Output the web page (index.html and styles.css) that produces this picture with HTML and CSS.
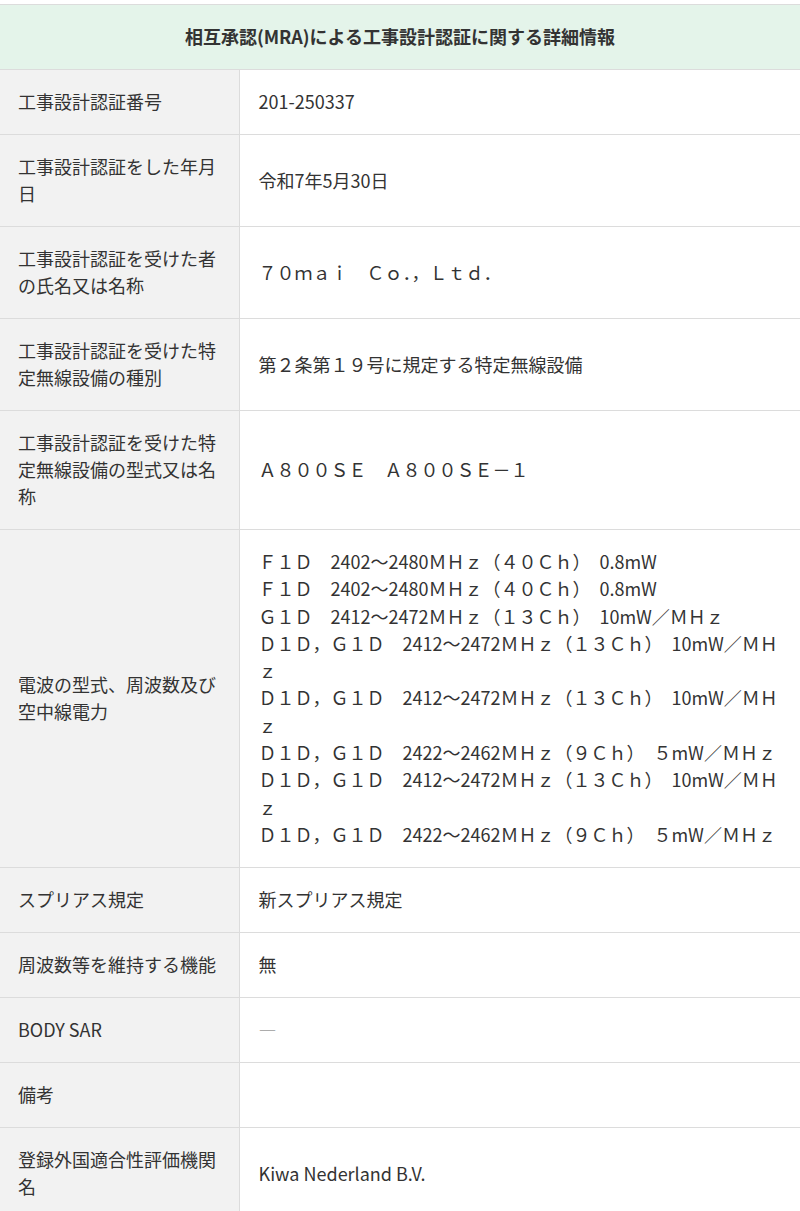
FILE: index.html
```html
<!DOCTYPE html>
<html lang="ja">
<head>
<meta charset="utf-8">
<link rel="stylesheet" href="styles.css">
</head>
<body>
<div class="page">
<table class="detail">
  <colgroup><col class="col-label"><col class="col-value"></colgroup>
  <thead>
    <tr><th colspan="2" class="head">相互承認(MRA)による工事設計認証に関する詳細情報</th></tr>
  </thead>
  <tbody>
    <tr><th>工事設計認証番号</th><td>201-250337</td></tr>
    <tr><th>工事設計認証をした年月日</th><td>令和7年5月30日</td></tr>
    <tr><th>工事設計認証を受けた者の氏名又は名称</th><td>７０ｍａｉ　Ｃｏ．，Ｌｔｄ．</td></tr>
    <tr><th>工事設計認証を受けた特定無線設備の種別</th><td>第２条第１９号に規定する特定無線設備</td></tr>
    <tr><th>工事設計認証を受けた特定無線設備の型式又は名称</th><td>Ａ８００ＳＥ　Ａ８００ＳＥ－１</td></tr>
    <tr><th>電波の型式、周波数及び空中線電力</th><td class="freq">Ｆ１Ｄ　2402～2480ＭＨｚ（４０Ｃｈ）　0.8mW<br>Ｆ１Ｄ　2402～2480ＭＨｚ（４０Ｃｈ）　0.8mW<br>Ｇ１Ｄ　2412～2472ＭＨｚ（１３Ｃｈ）　10mW／ＭＨｚ<br>Ｄ１Ｄ，Ｇ１Ｄ　2412～2472ＭＨｚ（１３Ｃｈ）　10mW／ＭＨｚ<br>Ｄ１Ｄ，Ｇ１Ｄ　2412～2472ＭＨｚ（１３Ｃｈ）　10mW／ＭＨｚ<br>Ｄ１Ｄ，Ｇ１Ｄ　2422～2462ＭＨｚ（９Ｃｈ）　５mW／ＭＨｚ<br>Ｄ１Ｄ，Ｇ１Ｄ　2412～2472ＭＨｚ（１３Ｃｈ）　10mW／ＭＨｚ<br>Ｄ１Ｄ，Ｇ１Ｄ　2422～2462ＭＨｚ（９Ｃｈ）　５mW／ＭＨｚ</td></tr>
    <tr><th>スプリアス規定</th><td>新スプリアス規定</td></tr>
    <tr><th>周波数等を維持する機能</th><td>無</td></tr>
    <tr><th>BODY SAR</th><td class="muted">―</td></tr>
    <tr><th>備考</th><td></td></tr>
    <tr><th>登録外国適合性評価機関名</th><td>Kiwa Nederland B.V.</td></tr>
  </tbody>
</table>
</div>
</body>
</html>
```

FILE: styles.css
```css
html, body {
  margin: 0;
  padding: 0;
  background: #fff;
}
.page {
  padding-top: 4px;
}
.detail {
  width: 800px;
  border-collapse: collapse;
  table-layout: fixed;
  font-family: "Noto Sans CJK JP", "Noto Sans", sans-serif;
  font-size: 18px;
  line-height: 27px;
  color: #333;
}
.col-label {
  width: 239px;
}
.detail th,
.detail td {
  border-top: 1px solid #dcdcdc;
  border-bottom: 1px solid #dcdcdc;
  padding: 18px 18px 19px;
  vertical-align: middle;
  text-align: left;
  font-weight: normal;
}
.detail tbody th {
  background: #f2f2f2;
  border-right: 1px solid #dcdcdc;
}
.detail tbody td {
  padding-left: 19px;
  padding-right: 18px;
}
.detail tbody td.freq {
  line-height: 27.3px;
}
.detail .head {
  background: #e4f4ea;
  text-align: center;
  font-weight: bold;
  color: #333;
}
.detail .muted {
  color: #999;
}
```
